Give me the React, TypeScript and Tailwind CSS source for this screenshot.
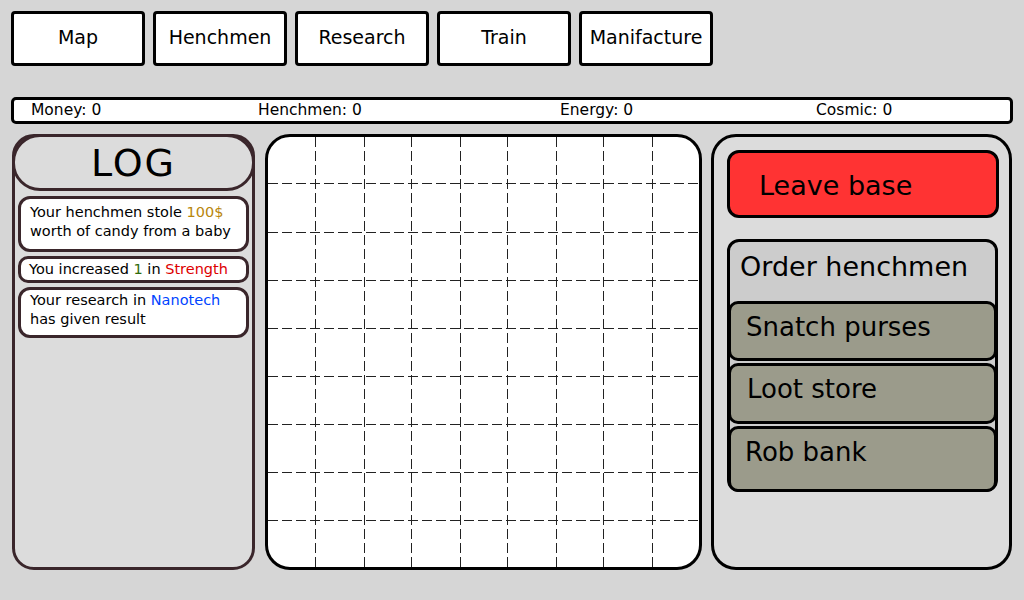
const FONT = { fontFamily: '"DejaVu Sans", "Noto Sans", sans-serif' };

const navItems = ["Map", "Henchmen", "Research", "Train", "Manifacture"];

function MapGrid() {
  const xs = [47, 96, 143, 192, 239, 288, 335, 384];
  const ys = [46, 95, 143, 191, 239, 287, 335, 383];
  return (
    <svg className="w-full h-full block" viewBox="0 0 431 430" preserveAspectRatio="none">
      {xs.map((x) => (
        <line key={"v" + x} x1={x + 0.5} y1={0} x2={x + 0.5} y2={430} stroke="#222" strokeWidth={1} strokeDasharray="10 4" />
      ))}
      {ys.map((y) => (
        <line key={"h" + y} x1={0} y1={y + 0.5} x2={431} y2={y + 0.5} stroke="#222" strokeWidth={1} strokeDasharray="10 4" />
      ))}
    </svg>
  );
}

export default function App() {
  return (
    <div className="w-[1024px] h-[600px] bg-[#d6d6d6] overflow-hidden text-black" style={FONT}>
      {/* Top nav */}
      <div className="flex gap-2 pl-[11px] pt-[11px]">
        {navItems.map((n) => (
          <div
            key={n}
            className="w-[134px] h-[55px] bg-white border-[3px] border-black rounded-[4px] flex items-start justify-center pt-[11px] text-[19px] leading-[24px]"
          >
            {n}
          </div>
        ))}
      </div>

      {/* Stats bar */}
      <div className="mx-[11px] mt-[31px] h-[27px] bg-white border-[3px] border-black rounded-[5px] flex items-center pl-[17px] text-[15.5px] leading-none">
        <span className="w-[227px]">Money: 0</span>
        <span className="w-[302px]">Henchmen: 0</span>
        <span className="w-[256px]">Energy: 0</span>
        <span>Cosmic: 0</span>
      </div>

      {/* Main */}
      <div className="flex mt-[10px] pl-[12px] h-[436px]">
        {/* Log */}
        <div className="w-[243px] h-full bg-[#dcdcdc] border-[3px] border-[#3a262b] rounded-[22px] flex flex-col">
          <div className="-mx-[3px] -mt-[3px] h-[57px] border-[3px] border-[#3a262b] rounded-[28px] flex items-center justify-center text-[38px] leading-none tracking-wider">
            LOG
          </div>
          <div className="flex flex-col gap-[4px] px-[3px] mt-[5px] text-[14.5px] leading-[19px]">
            <div className="h-[56px] bg-white border-[3px] border-[#3a262b] rounded-[12px] flex flex-col justify-center pl-[9px] pb-[5px]">
              <div>
                Your henchmen stole <span className="text-[#b8860b]">100$</span>
              </div>
              <div>worth of candy from a baby</div>
            </div>
            <div className="h-[27px] bg-white border-[3px] border-[#3a262b] rounded-[10px] flex items-center pl-[8px]">
              <div>
                You increased <span className="text-[#2f6a0a]">1</span> in{" "}
                <span className="text-[#dd0000]">Strength</span>
              </div>
            </div>
            <div className="h-[51px] bg-white border-[3px] border-[#3a262b] rounded-[12px] flex flex-col justify-center pl-[9px] pb-[5px]">
              <div>
                Your research in <span className="text-[#0044ff]">Nanotech</span>
              </div>
              <div>has given result</div>
            </div>
          </div>
        </div>

        {/* Map */}
        <div className="ml-[10px] w-[437px] h-full bg-white border-[3px] border-black rounded-[25px] overflow-hidden">
          <MapGrid />
        </div>

        {/* Actions */}
        <div className="ml-[9px] w-[301px] h-full bg-[#dcdcdc] border-[3px] border-black rounded-[25px] pl-[13px] pt-[13px]">
          <div className="w-[272px] h-[68px] bg-[#ff3333] border-[3px] border-black rounded-[12px] flex items-center pl-[29px] pt-[2px] text-[27px] leading-none">
            Leave base
          </div>
          <div className="mt-[21px] w-[271px] h-[253px] bg-[#cccccc] border-[3px] border-black rounded-[12px] flex flex-col">
            <div className="h-[59px] pl-[10px] pt-[8px] text-[27px] leading-[34px]">Order henchmen</div>
            <div className="-mx-[2px] flex flex-col gap-[2px] flex-1">
              <div className="h-[60px] bg-[#9b9b8b] border-[3px] border-black rounded-[10px] pl-[15px] pt-[6px] text-[26px] leading-[34px]">
                Snatch purses
              </div>
              <div className="h-[61px] bg-[#9b9b8b] border-[3px] border-black rounded-[10px] pl-[16px] pt-[6px] text-[26px] leading-[34px]">
                Loot store
              </div>
              <div className="flex-1 -mb-[3px] bg-[#9b9b8b] border-[3px] border-black rounded-[10px] pl-[14px] pt-[6px] text-[26px] leading-[34px]">
                Rob bank
              </div>
            </div>
          </div>
        </div>
      </div>
    </div>
  );
}
